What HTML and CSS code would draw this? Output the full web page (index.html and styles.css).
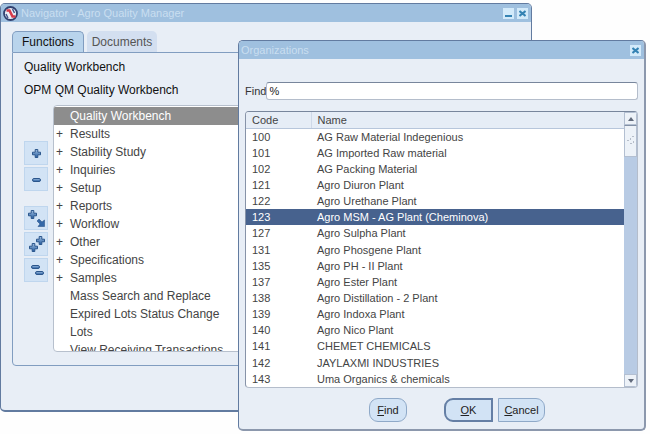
FILE: index.html
```html
<!DOCTYPE html>
<html lang="en">
<head>
<meta charset="utf-8">
<title>Navigator - Agro Quality Manager</title>
<link rel="stylesheet" href="styles.css">
</head>
<body>
<svg class="defs" aria-hidden="true">
  <defs>
    <linearGradient id="steel" x1="0" y1="0" x2="0" y2="1">
      <stop offset="0" stop-color="#a3c1e2"/>
      <stop offset="1" stop-color="#225a9f"/>
    </linearGradient>
    <g id="plus" fill="url(#steel)" stroke="#2b568c" stroke-width="1">
      <path d="M3.200.5h2.600v2.700h2.700v2.600H5.800v2.700H3.200V5.800H.5V3.200h2.700z"/>
    </g>
    <rect id="minus" x=".5" y=".5" width="8" height="3" rx="1.5" fill="url(#steel)" stroke="#2b568c"/>
    <path id="close" d="M.5 1l6 5M6.500 1l-6 5" stroke="#3583b4" stroke-width="2" fill="none"/>
  </defs>
</svg>

<main class="desktop">
  <section class="window navigator" aria-label="Navigator">
    <header class="titlebar">
      <svg class="logo" width="15" height="15" viewBox="0 0 15 15" aria-hidden="true">
        <circle cx="7.5" cy="7.5" r="6.500" fill="#e9edf6" stroke="#30406f" stroke-width="1.800"/>
        <path d="M3.500 4.500l3 0 3 6 3 0" fill="none" stroke="#d53b4c" stroke-width="2.600"/>
        <path d="M3 8l2 4M9.500 3l2 4" stroke="#45578c" stroke-width="1.500"/>
      </svg>
      <h1 class="title">Navigator - Agro Quality Manager</h1>
      <button class="win-btn" type="button" aria-label="Minimize"><svg width="7" height="7" viewBox="0 0 7 7"><path d="M0 6h7" stroke="#3583b4" stroke-width="2"/></svg></button>
      <button class="win-btn" type="button" aria-label="Close"><svg width="7" height="7" viewBox="0 0 7 7"><use href="#close"/></svg></button>
    </header>
    <div class="nav-body">
      <div class="tabs" role="tablist">
        <button class="tab active" type="button" role="tab" aria-selected="true">Functions</button>
        <button class="tab" type="button" role="tab" aria-selected="false">Documents</button>
      </div>
      <div class="panel">
        <p class="heading">Quality Workbench</p>
        <p class="heading">OPM QM Quality Workbench</p>
        <div class="nav-row">
          <div class="tools">
            <button class="tool" type="button" aria-label="Expand"><svg width="19" height="19" viewBox="0 0 19 19"><use href="#plus" x="5" y="5"/></svg></button>
            <button class="tool" type="button" aria-label="Collapse"><svg width="19" height="19" viewBox="0 0 19 19"><use href="#minus" x="5" y="8"/></svg></button>
            <button class="tool grouped" type="button" aria-label="Expand branch"><svg width="19" height="19" viewBox="0 0 19 19"><use href="#plus" x="1" y="1"/><path d="M10 12l2-2 3 3 2.500-2v6.500H11l2-2.500z" fill="#3468a8" stroke="#2b568c" stroke-width=".6"/></svg></button>
            <button class="tool" type="button" aria-label="Expand all"><svg width="19" height="19" viewBox="0 0 19 19"><use href="#plus" x="9" y="1"/><use href="#plus" x="2" y="8"/></svg></button>
            <button class="tool" type="button" aria-label="Collapse all"><svg width="19" height="19" viewBox="0 0 19 19"><use href="#minus" x="4" y="4"/><use href="#minus" x="8" y="10"/></svg></button>
          </div>
          <ul class="functions">
            <li class="current"><span class="mark"></span>Quality Workbench</li>
            <li><span class="mark">+</span>Results</li>
            <li><span class="mark">+</span>Stability Study</li>
            <li><span class="mark">+</span>Inquiries</li>
            <li><span class="mark">+</span>Setup</li>
            <li><span class="mark">+</span>Reports</li>
            <li><span class="mark">+</span>Workflow</li>
            <li><span class="mark">+</span>Other</li>
            <li><span class="mark">+</span>Specifications</li>
            <li><span class="mark">+</span>Samples</li>
            <li><span class="mark"></span>Mass Search and Replace</li>
            <li><span class="mark"></span>Expired Lots Status Change</li>
            <li><span class="mark"></span>Lots</li>
            <li><span class="mark"></span>View Receiving Transactions</li>
          </ul>
        </div>
      </div>
    </div>
  </section>

  <section class="window organizations" role="dialog" aria-label="Organizations">
    <header class="titlebar">
      <h2 class="title">Organizations</h2>
      <button class="win-btn" type="button" aria-label="Close"><svg width="7" height="7" viewBox="0 0 7 7"><use href="#close"/></svg></button>
    </header>
    <form class="org-body">
      <div class="find">
        <label for="find">Find</label>
        <input id="find" type="text" value="%">
      </div>
      <div class="list">
        <table>
          <thead><tr><th class="code">Code</th><th>Name</th></tr></thead>
          <tbody>
            <tr><td>100</td><td>AG Raw Material Indegenious</td></tr>
            <tr><td>101</td><td>AG Imported Raw material</td></tr>
            <tr><td>102</td><td>AG Packing Material</td></tr>
            <tr><td>121</td><td>Agro Diuron Plant</td></tr>
            <tr><td>122</td><td>Agro Urethane Plant</td></tr>
            <tr class="selected"><td>123</td><td>Agro MSM - AG Plant (Cheminova)</td></tr>
            <tr><td>127</td><td>Agro Sulpha Plant</td></tr>
            <tr><td>131</td><td>Agro Phosgene Plant</td></tr>
            <tr><td>135</td><td>Agro PH - II Plant</td></tr>
            <tr><td>137</td><td>Agro Ester Plant</td></tr>
            <tr><td>138</td><td>Agro Distillation - 2 Plant</td></tr>
            <tr><td>139</td><td>Agro Indoxa Plant</td></tr>
            <tr><td>140</td><td>Agro Nico Plant</td></tr>
            <tr><td>141</td><td>CHEMET CHEMICALS</td></tr>
            <tr><td>142</td><td>JAYLAXMI INDUSTRIES</td></tr>
            <tr><td>143</td><td>Uma Organics &amp; chemicals</td></tr>
          </tbody>
        </table>
        <div class="scrollbar">
          <button class="arrow" type="button" aria-label="Scroll up"><svg width="6" height="4" viewBox="0 0 6 4"><path d="M0 4l3-4 3 4z" fill="#626b7c"/></svg></button>
          <div class="thumb"><svg width="8" height="10" viewBox="0 0 8 10" fill="#b6bdc9"><path d="M5 0h2v1H5zM3 2h1v2H3zM0 4h2v1H0zM6 5h1v2H6zM3 7h2v1H3z"/></svg></div>
          <button class="arrow down" type="button" aria-label="Scroll down"><svg width="6" height="4" viewBox="0 0 6 4"><path d="M0 0l3 4 3-4z" fill="#626b7c"/></svg></button>
        </div>
      </div>
      <div class="actions">
        <button class="btn find-btn" type="button"><u>F</u>ind</button>
        <button class="btn ok" type="button"><u>O</u>K</button>
        <button class="btn cancel" type="button"><u>C</u>ancel</button>
      </div>
    </form>
  </section>
</main>
</body>
</html>
```

FILE: styles.css
```css
* {
  box-sizing: border-box;
}

body {
  margin: 0;
  background: #fefefe;
  color: #333;
  font-family: "Liberation Sans", Arial, sans-serif;
  font-size: 12px;
}

button {
  padding: 0;
  border: 0;
  color: inherit;
  font: inherit;
}

.defs {
  position: absolute;
  width: 0;
  height: 0;
}

.desktop {
  position: relative;
  min-height: 100vh;
  overflow: hidden;
}

/* Windows */
.window {
  position: absolute;
  overflow: hidden;
  border: 1px solid #627ba0;
  border-radius: 5px;
  background: #e8eef6;
}

.navigator {
  top: 3px;
  left: 0;
  right: 118px;
  border-bottom-width: 2px;
}

.organizations {
  top: 40px;
  left: 238px;
  right: 4px;
  border-right: 2px solid #8c98ad;
  border-bottom: 2px solid #8c98ad;
  font-size: 11px;
}

.titlebar {
  display: flex;
  align-items: center;
  gap: 3px;
  height: 18px;
  padding: 0 3px 0 2px;
  background: #9fc0df;
}

.title {
  flex: 1;
  margin: 0;
  color: #c9def0;
  font-size: 11px;
  font-weight: normal;
}

.win-btn {
  display: grid;
  place-items: center;
  width: 11px;
  height: 11px;
  background: #d3eafa;
}

/* Navigator */
.nav-body {
  padding: 9px 11px 44px;
}

.tabs {
  display: flex;
  gap: 3px;
  height: 21px;
}

.tab {
  width: 70px;
  border-radius: 5px 5px 0 0;
  background: #d3dff0;
  color: #555;
}

.tab.active {
  width: 72px;
  border: 1px solid #819dc0;
  border-bottom: 0;
  background: #b9d4ec;
  color: #111;
}

.panel {
  padding: 3px 11px 13px;
  border: 1px solid #819dc0;
  border-radius: 0 4px 4px 4px;
}

.heading {
  margin: 0;
  color: #111;
  line-height: 23px;
}

.nav-row {
  display: flex;
  gap: 5px;
  padding-top: 3px;
}

.tools {
  display: flex;
  flex-direction: column;
  gap: 2px;
  padding-top: 36px;
}

.tool {
  display: grid;
  place-items: center;
  width: 24px;
  height: 24px;
  border: 1px solid #bfd6ee;
  background: #d2e3f5;
}

.tool.grouped {
  margin-top: 13px;
}

.functions {
  flex: 1;
  height: 247px;
  margin: 0;
  padding: 1px 0 0;
  overflow: hidden;
  border: 1px solid #b7c0cd;
  border-radius: 4px;
  background: #fff;
  color: #444;
  line-height: 18px;
  list-style: none;
}

.functions li {
  display: flex;
  white-space: nowrap;
}

.functions .current {
  background: #8d8d8d;
  color: #fff;
}

.mark {
  width: 16px;
  padding-left: 2px;
}

/* Organizations */
.org-body {
  padding: 23px 6px 7px;
}

.find {
  display: flex;
  align-items: center;
}

.find input {
  flex: 1;
  min-width: 0;
  height: 18px;
  padding: 0 2px;
  border: 1px solid #b4bdcb;
  border-top-color: #78869c;
  border-radius: 3px;
  background: #fff;
  color: #222;
  font: inherit;
}

.list {
  display: flex;
  margin-top: 11px;
  overflow: hidden;
  border: 1px solid #b4bdcb;
  border-top-color: #78869c;
  border-left-color: #8793a8;
  border-radius: 4px;
  background: #fff;
}

table {
  flex: 1;
  height: 275px;
  border-collapse: collapse;
  table-layout: fixed;
  color: #444;
}

th,
td {
  padding: 0 0 0 6px;
  font-weight: normal;
  line-height: 14px;
  text-align: left;
}

th {
  height: 16px;
  border-bottom: 1px solid #b7c6db;
  background: #e6edf6;
}

.code {
  width: 65px;
  border-right: 1px solid #cfd9e8;
}

.selected {
  background: #47628e;
  color: #fff;
}

.scrollbar {
  display: flex;
  flex-direction: column;
  width: 13px;
  background: #b8cbe4;
}

.arrow,
.thumb {
  display: grid;
  place-items: center;
  height: 13px;
  border: 1px solid #b3bfd1;
  background: #edf2f8;
}

.thumb {
  height: 32px;
  border-top-color: #8290a6;
}

.arrow.down {
  margin-top: auto;
}

.actions {
  display: flex;
  align-items: center;
  justify-content: center;
  gap: 5px;
  margin-top: 10px;
  padding-left: 31px;
}

.btn {
  height: 24px;
  border: 1px solid #8fa9c8;
  background: #d2e3f5;
  color: #222;
}

.find-btn {
  width: 38px;
  margin-right: 32px;
  border-radius: 9px;
}

.ok {
  width: 49px;
  border: 2px solid #657fa5;
  border-radius: 9px 0 0 9px;
}

.cancel {
  width: 47px;
  border-radius: 0 9px 9px 0;
}
```
